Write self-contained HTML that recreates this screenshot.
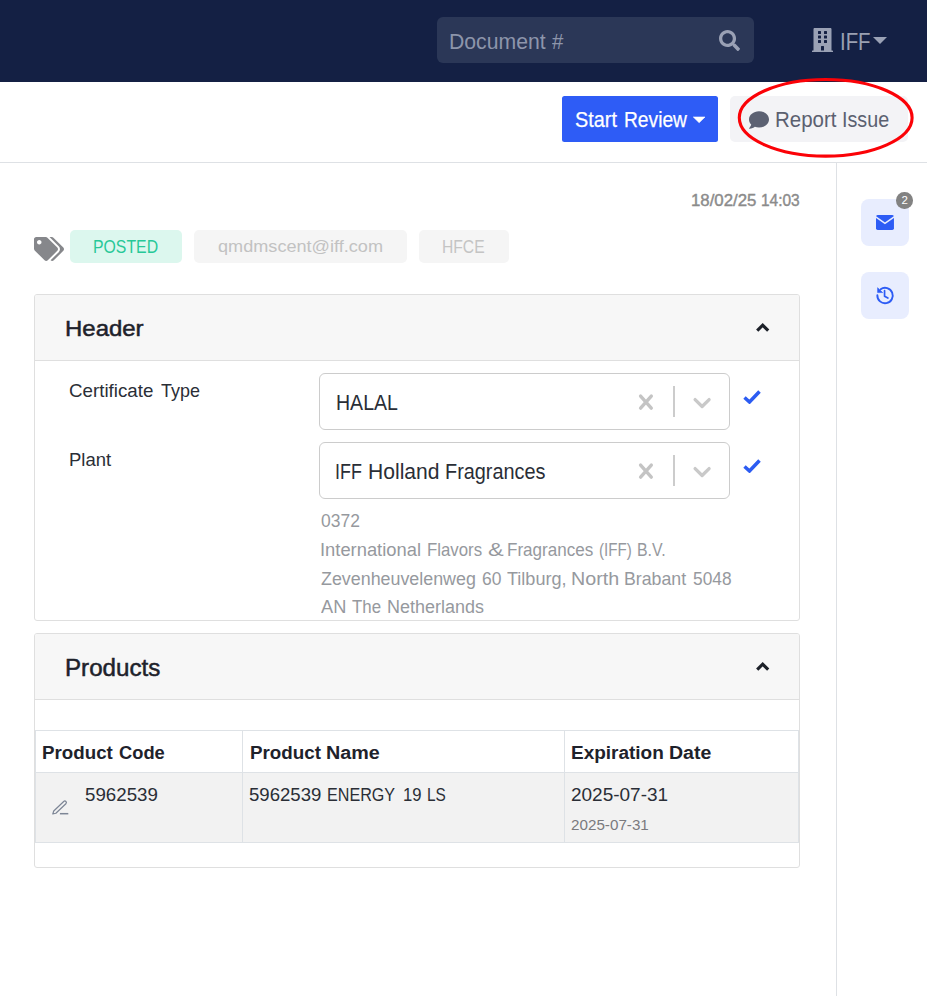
<!DOCTYPE html>
<html>
<head>
<meta charset="utf-8">
<title>Document Review</title>
<style>
*{box-sizing:border-box;margin:0;padding:0}
html,body{width:927px;height:996px;overflow:hidden;background:#fff;font-family:"Liberation Sans",sans-serif;color:#212529}
.abs{position:absolute}
#nav{left:0;top:0;width:927px;height:82px;background:#142044}
#search{left:437px;top:17px;width:317px;height:46px;background:#2b3757;border-radius:6px}
#search .ph{left:13px;top:12px;font-size:19.5px;color:#8b93aa;white-space:nowrap;line-height:24px}
#toolbar{left:0;top:82px;width:927px;height:81px;background:#fff;border-bottom:1px solid #dee1e5}
#vline{left:836px;top:163px;width:1px;height:833px;background:#dee1e5}
.btn{border-radius:4px;height:46px;top:96px;white-space:nowrap;font-size:19.5px;line-height:46px}
#start{left:562px;width:156px;background:#2e5cf6;color:#fff;border-radius:2.500px}
#report{left:730px;width:178px;background:#f3f3f6;color:#5b6070;border-radius:5px}
.badge{top:230px;height:33px;border-radius:5px;font-size:16.5px;line-height:33px;text-align:center;white-space:nowrap}
.card{left:34px;width:766px;border:1px solid #dfdfdf;border-radius:3px;background:#fff}
.card .hd{left:0;top:0;width:764px;height:66px;background:#f7f7f7;border-bottom:1px solid #dfdfdf;border-radius:2px 2px 0 0}
.card .hd .t{left:30px;top:19px;font-size:22px;line-height:28px;font-weight:bold;color:#1f2329;white-space:nowrap}
.lbl{font-size:17.5px;line-height:22px;color:#212529;white-space:nowrap}
.sel{left:319px;width:411px;height:57px;border:1px solid #ccc;border-radius:6px;background:#fff}
.sel .v{left:16px;top:16px;font-size:19.5px;line-height:24px;color:#212529;white-space:nowrap}
.sel .sep{left:352.800px;top:12px;width:2px;height:31px;background:#cccccc}
.muted{font-size:17px;line-height:22px;color:#8a8a8a;white-space:nowrap}
.side{left:861px;width:48px;height:47px;border-radius:8px;background:#e8edfe}
table{border-collapse:collapse}
.tx{position:absolute;white-space:nowrap;transform-origin:0 0;display:block}
</style>
</head>
<body>
<div id="nav" class="abs">
  <div id="search" class="abs">
    <svg class="abs" style="left:282px;top:13px" width="21" height="21" viewBox="0 0 512 512"><path fill="#9aa1b5" d="M505 442.7L405.3 343c-4.500-4.500-10.600-7-17-7H372c27.600-35.300 44-79.700 44-128C416 93.100 322.900 0 208 0S0 93.100 0 208s93.100 208 208 208c48.300 0 92.700-16.400 128-44v16.300c0 6.400 2.500 12.500 7 17l99.700 99.700c9.400 9.400 24.600 9.400 33.900 0l28.300-28.300c9.400-9.400 9.400-24.600.1-34zM208 336c-70.700 0-128-57.200-128-128 0-70.700 57.200-128 128-128 70.700 0 128 57.200 128 128 0 70.700-57.200 128-128 128z"/></svg>
  </div>
  <svg class="abs" style="left:812px;top:28px" width="21" height="24" viewBox="0 0 448 512"><path fill="#9aa1b5" d="M436 480h-20V24c0-13.255-10.745-24-24-24H56C42.745 0 32 10.745 32 24v456H12c-6.627 0-12 5.373-12 12v20h448v-20c0-6.627-5.373-12-12-12zM128 76c0-6.627 5.373-12 12-12h40c6.627 0 12 5.373 12 12v40c0 6.627-5.373 12-12 12h-40c-6.627 0-12-5.373-12-12V76zm0 96c0-6.627 5.373-12 12-12h40c6.627 0 12 5.373 12 12v40c0 6.627-5.373 12-12 12h-40c-6.627 0-12-5.373-12-12v-40zm52 148h-40c-6.627 0-12-5.373-12-12v-40c0-6.627 5.373-12 12-12h40c6.627 0 12 5.373 12 12v40c0 6.627-5.373 12-12 12zm76 160h-64v-84c0-6.627 5.373-12 12-12h40c6.627 0 12 5.373 12 12v84zm64-172c0 6.627-5.373 12-12 12h-40c-6.627 0-12-5.373-12-12v-40c0-6.627 5.373-12 12-12h40c6.627 0 12 5.373 12 12v40zm0-96c0 6.627-5.373 12-12 12h-40c-6.627 0-12-5.373-12-12v-40c0-6.627 5.373-12 12-12h40c6.627 0 12 5.373 12 12v40zm0-96c0 6.627-5.373 12-12 12h-40c-6.627 0-12-5.373-12-12V76c0-6.627 5.373-12 12-12h40c6.627 0 12 5.373 12 12v40z"/></svg>
  <div class="abs" style="left:873px;top:37px;width:0;height:0;border-left:7px solid transparent;border-right:7px solid transparent;border-top:7px solid #9aa1b5"></div>
</div>

<div id="toolbar" class="abs"></div>
<div id="start" class="btn abs">
  <svg class="abs" style="left:130px;top:18px" width="16" height="12" viewBox="0 0 16 12"><path d="M1.300 3 L13 3 L7.150 8.700 Z" fill="#fff" stroke="#fff" stroke-width="0.600" stroke-linejoin="round"/></svg>
</div>
<div id="report" class="btn abs">
  <svg class="abs" style="left:19px;top:14px" width="20" height="20" viewBox="0 0 512 512"><path fill="#5c6172" d="M256 32C114.600 32 0 125.100 0 240c0 49.600 21.400 95 57 130.700C44.500 421.100 2.700 466 2.200 466.500c-2.200 2.300-2.800 5.700-1.500 8.700S4.800 480 8 480c66.300 0 116-31.800 140.600-51.400 32.700 12.300 69 19.400 107.400 19.400 141.400 0 256-93.100 256-208S397.400 32 256 32z"/></svg>
</div>
<svg class="abs" style="left:730px;top:72px" width="197" height="92" viewBox="0 0 197 92"><ellipse cx="95.700" cy="45.800" rx="86.400" ry="38.300" fill="none" stroke="#fb0207" stroke-width="3.100"/></svg>

<div id="vline" class="abs"></div>



<!-- tags -->
<svg class="abs" style="left:34px;top:237px" width="30" height="24" viewBox="0 0 640 512" preserveAspectRatio="none"><path fill="#86878b" d="M497.941 225.941L286.059 14.059A48 48 0 0 0 252.118 0H48C21.490 0 0 21.490 0 48v204.118a48 48 0 0 0 14.059 33.941l211.882 211.882c18.744 18.745 49.136 18.746 67.882 0l204.118-204.118c18.745-18.745 18.745-49.137 0-67.882zM112 160c-26.510 0-48-21.490-48-48s21.490-48 48-48 48 21.490 48 48-21.490 48-48 48zm513.941 133.823L421.823 497.941c-18.745 18.745-49.137 18.745-67.882 0l-.36-.36L527.640 323.522c16.999-16.999 26.360-39.600 26.360-63.640s-9.362-46.641-26.360-63.640L331.397 0h48.721a48 48 0 0 1 33.941 14.059l211.882 211.882c18.745 18.745 18.745 49.137 0 67.882z"/></svg>
<div class="badge abs" style="left:70px;width:112px;background:#dcf7ee"></div>
<div class="badge abs" style="left:194px;width:213px;background:#f5f5f5"></div>
<div class="badge abs" style="left:419px;width:90px;background:#f5f5f5"></div>

<!-- Header card -->
<div class="card abs" style="top:294px;height:327px">
  <div class="hd abs">
    <svg class="abs" style="left:720px;top:27px" width="16" height="12" viewBox="0 0 16 12"><path d="M2.200 8.700 L7.700 3.200 L13.200 8.700" fill="none" stroke="#1d2129" stroke-width="3.100"/></svg>
  </div>
</div>

<div class="sel abs" style="top:373px">
  <svg class="abs" style="left:317px;top:18px" width="18" height="20" viewBox="0 0 18 20"><path d="M3.600 4.100 L14.300 16.100 M14.300 4.100 L3.600 16.100" stroke="#c4c4c4" stroke-width="3.400" stroke-linecap="round" fill="none"/></svg>
  <div class="sep abs"></div>
  <svg class="abs" style="left:371px;top:21px" width="22" height="16" viewBox="0 0 22 16"><path d="M4.100 4.600 L11.100 11.500 L18.100 4.600" fill="none" stroke="#c9c9c9" stroke-width="3.300" stroke-linecap="round" stroke-linejoin="round"/></svg>
</div>
<svg class="abs" style="left:743.300px;top:390px" width="18" height="14" viewBox="0 0 18 14"><path d="M1.500 7.500 L6.500 12 L16.500 1.500" fill="none" stroke="#2c5cf2" stroke-width="3.500"/></svg>


<div class="sel abs" style="top:442px">
  <svg class="abs" style="left:317px;top:18px" width="18" height="20" viewBox="0 0 18 20"><path d="M3.600 4.100 L14.300 16.100 M14.300 4.100 L3.600 16.100" stroke="#c4c4c4" stroke-width="3.400" stroke-linecap="round" fill="none"/></svg>
  <div class="sep abs"></div>
  <svg class="abs" style="left:371px;top:21px" width="22" height="16" viewBox="0 0 22 16"><path d="M4.100 4.600 L11.100 11.500 L18.100 4.600" fill="none" stroke="#c9c9c9" stroke-width="3.300" stroke-linecap="round" stroke-linejoin="round"/></svg>
</div>
<svg class="abs" style="left:743.300px;top:459px" width="18" height="14" viewBox="0 0 18 14"><path d="M1.500 7.500 L6.500 12 L16.500 1.500" fill="none" stroke="#2c5cf2" stroke-width="3.500"/></svg>


<!-- Products card -->
<div class="card abs" style="top:633px;height:235px">
  <div class="hd abs">
    <svg class="abs" style="left:720px;top:27px" width="16" height="12" viewBox="0 0 16 12"><path d="M2.200 8.700 L7.700 3.200 L13.200 8.700" fill="none" stroke="#1d2129" stroke-width="3.100"/></svg>
  </div>
</div>
<div class="abs" style="left:35px;top:730px;width:764px;height:113px;border:1px solid #dee2e6"></div>
<div class="abs" style="left:36px;top:772px;width:762px;height:70px;background:#f2f2f2;border-top:1px solid #dee2e6"></div>
<div class="abs" style="left:242px;top:730px;width:1px;height:113px;background:#dee2e6"></div>
<div class="abs" style="left:564px;top:730px;width:1px;height:113px;background:#dee2e6"></div>
<svg class="abs" style="left:45px;top:790px" width="40" height="35" viewBox="0 0 40 35"><path d="M7.800 24 L8.720 20.980 L18.720 11.480 A1.550 1.550 0 0 1 20.880 13.720 L10.880 23.220 Z" fill="none" stroke="#7d8696" stroke-width="1.200" stroke-linejoin="round"/><path d="M14.900 23.700 L23.300 23.700" fill="none" stroke="#7d8696" stroke-width="1.500"/></svg>

<!-- Sidebar -->
<div class="side abs" style="top:199px">
  <svg class="abs" style="left:9px;top:6px" width="30" height="30" viewBox="0 0 30 30"><rect x="6" y="9.900" width="17.950" height="15" rx="1.700" fill="#2d5cf5"/><path d="M5.400 11.600 L14.950 18.450 L24.500 11.600" fill="none" stroke="#e8edfe" stroke-width="1.500"/></svg>
</div>
<div class="abs" style="left:896.4px;top:192px;width:16.500px;height:16.500px;border-radius:50%;background:#828282;color:#fff;font-size:11.500px;line-height:16.500px;text-align:center">2</div>
<div class="side abs" style="top:272px">
  <svg class="abs" style="left:9px;top:8px" width="30" height="30" viewBox="0 0 30 30"><path d="M10.630 9.220 A7.700 7.700 0 1 1 7.350 15.260" fill="none" stroke="#2d5cf5" stroke-width="1.900" stroke-linecap="round"/><path d="M7.600 7.700 L7.600 12.600 L12.700 12.600 Z" fill="#2d5cf5" stroke="#2d5cf5" stroke-width="0.600" stroke-linejoin="round"/><path d="M14.560 10.700 L14.560 16.180 L17.900 18.100" fill="none" stroke="#2d5cf5" stroke-width="1.700" stroke-linecap="round" stroke-linejoin="round"/></svg>
</div>
<span class="tx" id="t_doc_0" style="left:448.99px;top:29.00px;font-size:21.50px;line-height:27px;color:#8d95ab;transform:scale(0.9861,1.0000)">Document</span>
<span class="tx" id="t_doc_1" style="left:552.05px;top:29.00px;font-size:21.50px;line-height:27px;color:#8d95ab;transform:scale(0.9526,1.0000)">#</span>
<span class="tx" id="t_iff" style="left:839.76px;top:26.00px;font-size:24.75px;line-height:31px;color:#9aa0b2;transform:scale(0.8238,1.0000)">IFF</span>
<span class="tx" id="t_start_0" style="left:574.76px;top:106.00px;font-size:21.75px;line-height:27px;color:#ffffff;transform:scale(0.9123,1.0000);-webkit-text-stroke:0.25px #ffffff">Start</span>
<span class="tx" id="t_start_1" style="left:623.95px;top:106.00px;font-size:21.75px;line-height:27px;color:#ffffff;transform:scale(0.8828,1.0000);-webkit-text-stroke:0.25px #ffffff">Review</span>
<span class="tx" id="t_rep_0" style="left:774.60px;top:107.01px;font-size:21.50px;line-height:27px;color:#5b6070;transform:scale(0.9519,1.0000)">Report</span>
<span class="tx" id="t_rep_1" style="left:842.29px;top:107.01px;font-size:21.50px;line-height:27px;color:#5b6070;transform:scale(0.9174,1.0000)">Issue</span>
<span class="tx" id="t_ts_0" style="left:690.69px;top:190.00px;font-size:16.25px;line-height:20px;color:#8b8b8b;transform:scale(1.0347,1.0000);-webkit-text-stroke:0.4px #8b8b8b">18/02/25</span>
<span class="tx" id="t_ts_1" style="left:760.69px;top:190.00px;font-size:16.25px;line-height:20px;color:#8b8b8b;transform:scale(0.9523,1.0000);-webkit-text-stroke:0.4px #8b8b8b">14:03</span>
<span class="tx" id="t_posted" style="left:93.21px;top:236.01px;font-size:18.00px;line-height:22px;color:#27c898;transform:scale(0.8793,1.0000)">POSTED</span>
<span class="tx" id="t_mail" style="left:218.47px;top:236.00px;font-size:16.25px;line-height:20px;color:#c2c2c2;transform:scale(1.1146,1.0000)">qmdmscent@iff.com</span>
<span class="tx" id="t_hfce" style="left:442.36px;top:236.01px;font-size:18.00px;line-height:22px;color:#c4c4c4;transform:scale(0.8691,1.0000)">HFCE</span>
<span class="tx" id="t_header" style="left:64.90px;top:315.00px;font-size:22.25px;line-height:28px;color:#1e222b;transform:scale(1.0770,1.0000);-webkit-text-stroke:0.5px #1e222b">Header</span>
<span class="tx" id="t_cert_0" style="left:69.01px;top:379.01px;font-size:19.25px;line-height:24px;color:#2a2e36;transform:scale(0.9739,1.0000)">Certificate</span>
<span class="tx" id="t_cert_1" style="left:160.82px;top:379.01px;font-size:19.25px;line-height:24px;color:#2a2e36;transform:scale(0.9323,1.0000)">Type</span>
<span class="tx" id="t_halal" style="left:335.87px;top:389.00px;font-size:21.75px;line-height:27px;color:#2a2e36;transform:scale(0.8984,1.0000)">HALAL</span>
<span class="tx" id="t_plant" style="left:69.27px;top:448.00px;font-size:18.75px;line-height:23px;color:#2a2e36;transform:scale(0.9851,1.0000)">Plant</span>
<span class="tx" id="t_iffh_0" style="left:335.23px;top:458.00px;font-size:21.75px;line-height:27px;color:#2a2e36;transform:scale(0.8229,1.0000)">IFF</span>
<span class="tx" id="t_iffh_1" style="left:368.02px;top:458.00px;font-size:21.75px;line-height:27px;color:#2a2e36;transform:scale(0.9701,1.0000)">Holland</span>
<span class="tx" id="t_iffh_2" style="left:445.00px;top:458.00px;font-size:21.75px;line-height:27px;color:#2a2e36;transform:scale(0.9136,1.0000)">Fragrances</span>
<span class="tx" id="t_a1" style="left:321.21px;top:509.00px;font-size:18.50px;line-height:23px;color:#96999e;transform:scale(0.9450,1.0000)">0372</span>
<span class="tx" id="t_a2_0" style="left:320.26px;top:538.01px;font-size:18.25px;line-height:23px;color:#96999e;transform:scale(1.0053,1.0000)">International</span>
<span class="tx" id="t_a2_1" style="left:427.37px;top:538.01px;font-size:18.25px;line-height:23px;color:#96999e;transform:scale(0.9199,1.0000)">Flavors</span>
<span class="tx" id="t_a2_2" style="left:487.76px;top:538.01px;font-size:18.25px;line-height:23px;color:#96999e;transform:scale(1.2888,1.0000)">&amp;</span>
<span class="tx" id="t_a2_3" style="left:506.67px;top:538.01px;font-size:18.25px;line-height:23px;color:#96999e;transform:scale(0.9346,1.0000)">Fragrances</span>
<span class="tx" id="t_a2_4" style="left:599.30px;top:538.01px;font-size:18.25px;line-height:23px;color:#96999e;transform:scale(0.8281,1.0000)">(IFF)</span>
<span class="tx" id="t_a2_5" style="left:636.66px;top:538.01px;font-size:18.25px;line-height:23px;color:#96999e;transform:scale(0.8710,1.0000)">B.V.</span>
<span class="tx" id="t_a3_0" style="left:320.84px;top:567.01px;font-size:18.25px;line-height:23px;color:#96999e;transform:scale(0.9784,1.0000)">Zevenheuvelenweg</span>
<span class="tx" id="t_a3_1" style="left:481.91px;top:567.01px;font-size:18.25px;line-height:23px;color:#96999e;transform:scale(0.9576,1.0000)">60</span>
<span class="tx" id="t_a3_2" style="left:507.07px;top:567.01px;font-size:18.25px;line-height:23px;color:#96999e;transform:scale(0.9888,1.0000)">Tilburg,</span>
<span class="tx" id="t_a3_3" style="left:570.86px;top:567.01px;font-size:18.25px;line-height:23px;color:#96999e;transform:scale(1.0788,1.0000)">North</span>
<span class="tx" id="t_a3_4" style="left:624.43px;top:567.01px;font-size:18.25px;line-height:23px;color:#96999e;transform:scale(0.9714,1.0000)">Brabant</span>
<span class="tx" id="t_a3_5" style="left:693.37px;top:567.01px;font-size:18.25px;line-height:23px;color:#96999e;transform:scale(0.9487,1.0000)">5048</span>
<span class="tx" id="t_a4_0" style="left:321.30px;top:596.01px;font-size:18.00px;line-height:22px;color:#96999e;transform:scale(1.0112,1.0000)">AN</span>
<span class="tx" id="t_a4_1" style="left:352.13px;top:596.01px;font-size:18.00px;line-height:22px;color:#96999e;transform:scale(0.9370,1.0000)">The</span>
<span class="tx" id="t_a4_2" style="left:387.10px;top:596.01px;font-size:18.00px;line-height:22px;color:#96999e;transform:scale(0.9980,1.0000)">Netherlands</span>
<span class="tx" id="t_prod" style="left:64.89px;top:654.00px;font-size:23.50px;line-height:29px;color:#1e222b;transform:scale(1.0278,1.0000);-webkit-text-stroke:0.5px #1e222b">Products</span>
<span class="tx" id="t_h1_0" style="left:42.11px;top:741.01px;font-size:19.25px;line-height:24px;color:#1e222b;transform:scale(0.9736,1.0000);font-weight:bold">Product</span>
<span class="tx" id="t_h1_1" style="left:118.63px;top:741.01px;font-size:19.25px;line-height:24px;color:#1e222b;transform:scale(0.9502,1.0000);font-weight:bold">Code</span>
<span class="tx" id="t_h2_0" style="left:249.85px;top:741.01px;font-size:19.25px;line-height:24px;color:#1e222b;transform:scale(0.9769,1.0000);font-weight:bold">Product</span>
<span class="tx" id="t_h2_1" style="left:326.16px;top:741.01px;font-size:19.25px;line-height:24px;color:#1e222b;transform:scale(1.0252,1.0000);font-weight:bold">Name</span>
<span class="tx" id="t_h3_0" style="left:571.23px;top:741.01px;font-size:19.25px;line-height:24px;color:#1e222b;transform:scale(0.9859,1.0000);font-weight:bold">Expiration</span>
<span class="tx" id="t_h3_1" style="left:668.78px;top:741.01px;font-size:19.25px;line-height:24px;color:#1e222b;transform:scale(1.0139,1.0000);font-weight:bold">Date</span>
<span class="tx" id="t_c1" style="left:85.02px;top:783.00px;font-size:19.00px;line-height:24px;color:#2a2e36;transform:scale(0.9848,1.0000)">5962539</span>
<span class="tx" id="t_c2_0" style="left:249.35px;top:783.00px;font-size:19.00px;line-height:24px;color:#2a2e36;transform:scale(0.9785,1.0000)">5962539</span>
<span class="tx" id="t_c2_1" style="left:326.67px;top:783.00px;font-size:19.00px;line-height:24px;color:#2a2e36;transform:scale(0.8489,1.0000)">ENERGY</span>
<span class="tx" id="t_c2_2" style="left:402.76px;top:783.00px;font-size:19.00px;line-height:24px;color:#2a2e36;transform:scale(0.8761,1.0000)">19</span>
<span class="tx" id="t_c2_3" style="left:427.31px;top:783.00px;font-size:19.00px;line-height:24px;color:#2a2e36;transform:scale(0.8119,1.0000)">LS</span>
<span class="tx" id="t_c3" style="left:570.61px;top:783.00px;font-size:19.00px;line-height:24px;color:#2a2e36;transform:scale(0.9987,1.0000)">2025-07-31</span>
<span class="tx" id="t_c4" style="left:570.79px;top:815.01px;font-size:15.50px;line-height:19px;color:#7a7a7e;transform:scale(0.9816,1.0000)">2025-07-31</span>
</body>
</html>
